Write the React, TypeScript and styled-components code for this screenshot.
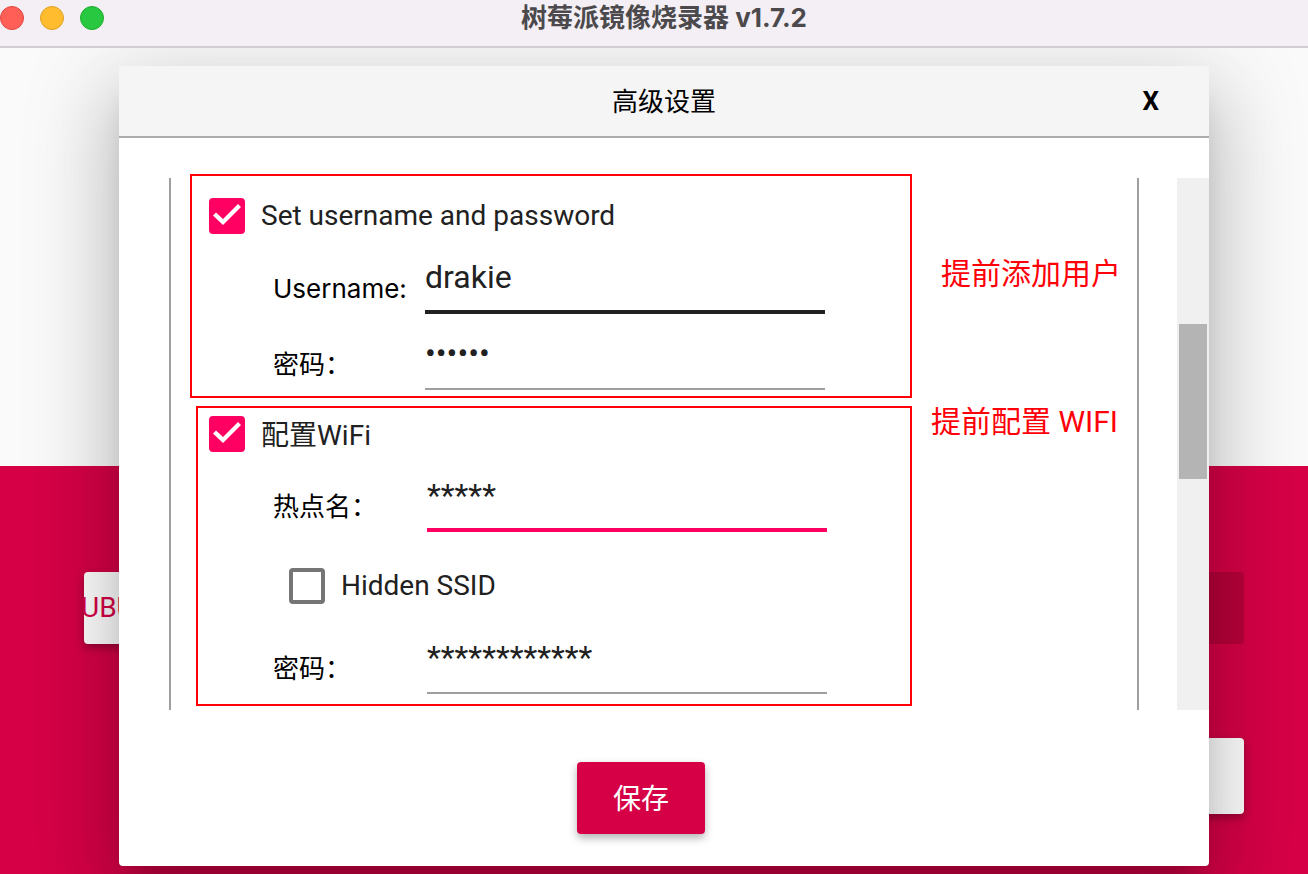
import React, { useState } from "react";
import styled, { createGlobalStyle } from "styled-components";

const systemFont = `Inter, "Noto Sans CJK SC", sans-serif`;
const materialFont = `Roboto, "Noto Sans CJK SC", sans-serif`;

const GlobalStyle = createGlobalStyle`
  * { box-sizing: border-box; }
  body { margin: 0; font-family: ${systemFont}; font-size: 26px; color: #000; }
  button, input { font: inherit; }
`;

const Window = styled.div`
  display: flex;
  flex-direction: column;
  min-height: 100vh;
`;

const TitleBar = styled.header`
  display: grid;
  align-items: center;
  height: 48px;
  padding-bottom: 10px;
  background: #f4eff5;
  border-bottom: 2px solid #d0ced1;
`;

const Lights = styled.div`
  grid-area: 1 / 1;
  display: flex;
  gap: 16px;
`;

const Light = styled.button<{ $fill: string; $edge: string }>`
  width: 24px;
  height: 24px;
  padding: 0;
  border: 1px solid ${(p) => p.$edge};
  border-radius: 50%;
  background: ${(p) => p.$fill};
`;

const WindowTitle = styled.h1`
  grid-area: 1 / 1;
  justify-self: center;
  margin: 0;
  padding-left: 20px;
  font-size: 26px;
  line-height: 32px;
  font-weight: 700;
  color: #4b494c;
`;

const Stage = styled.main`
  flex: 1;
  display: grid;
  overflow: hidden;
`;

const Backdrop = styled.div`
  grid-area: 1 / 1;
  display: flex;
  flex-direction: column;
  background: #fafafa;
`;

const Hero = styled.div`
  flex: 0 0 418px;
`;

const Actions = styled.div`
  flex: 1;
  display: flex;
  flex-direction: column;
  gap: 94px;
  padding: 106px 64px 0 84px;
  background: #d60047;
`;

const ActionRow = styled.div<{ $end?: boolean }>`
  display: flex;
  justify-content: ${(p) => (p.$end ? "flex-end" : "space-between")};
`;

const BackButton = styled.button<{ $tall?: boolean }>`
  width: 320px;
  height: ${(p) => (p.$tall ? 76 : 72)}px;
  padding: 0 0 2px;
  border: 0;
  border-radius: 4px;
  background: #fff;
  box-shadow: 0 4px 8px rgba(0, 0, 0, 0.3);
  color: #d60047;
  font-family: ${materialFont};
  font-size: 28px;
  text-align: left;
  text-indent: -3px;

  &:disabled {
    background: #b8003a;
    box-shadow: none;
  }
`;

const Dialog = styled.form`
  grid-area: 1 / 1;
  align-self: start;
  z-index: 1;
  margin: 18px 99px 8px 119px;
  background: #fff;
  border-radius: 0 0 4px 4px;
  box-shadow:
    0 22px 30px -14px rgba(0, 0, 0, 0.2),
    0 48px 76px 6px rgba(0, 0, 0, 0.14),
    0 18px 92px 16px rgba(0, 0, 0, 0.12);
`;

const DialogHeader = styled.div`
  display: grid;
  grid-template-columns: 1fr auto 1fr;
  align-items: center;
  height: 72px;
  background: #f5f5f5;
  border-bottom: 2px solid #acacac;
`;

const DialogTitle = styled.h2`
  grid-column: 2;
  margin: 0;
  padding-top: 2px;
  font-size: 26px;
  line-height: 36px;
  font-weight: 400;
`;

const CloseButton = styled.button`
  justify-self: end;
  margin-right: 50px;
  padding: 0;
  border: 0;
  background: none;
  color: #000;
  font-family: Roboto, sans-serif;
  font-size: 26px;
  font-weight: 700;
`;

const ScrollArea = styled.div`
  display: flex;
  justify-content: space-between;
  margin-top: 40px;
  padding-left: 50px;
`;

const Panel = styled.div`
  flex: 1;
  display: flex;
  flex-direction: column;
  gap: 8px;
  height: 532px;
  margin-right: 38px;
  border: solid #9e9e9e;
  border-width: 0 2px;
`;

const ScrollTrack = styled.div`
  width: 32px;
  padding: 146px 2px 0;
  background: #f0f0f0;
`;

const ScrollThumb = styled.div`
  height: 155px;
  background: #b4b4b4;
`;

const GroupRow = styled.div<{ $indent: number; $lift?: number }>`
  display: flex;
  margin-top: ${(p) => -(p.$lift ?? 0)}px;
  padding-left: ${(p) => p.$indent}px;
`;

const Group = styled.section<{ $pad: string }>`
  flex: 1;
  min-width: 0;
  border: 2px solid #ff0008;
  padding: ${(p) => p.$pad};
`;

const Note = styled.p<{ $top: number; $left: number }>`
  width: 225px;
  margin: 0;
  padding: ${(p) => `${p.$top}px 0 0 ${p.$left}px`};
  color: #ff0008;
  font-family: ${materialFont};
  font-size: 30px;
  line-height: 32px;
  white-space: nowrap;
`;

const CheckLabel = styled.label<{ $inset?: boolean }>`
  display: flex;
  align-items: center;
  gap: 16px;
  height: 36px;
  margin: ${(p) => (p.$inset ? "36px 0 30px 80px" : "0 0 20px")};
  color: #212121;
  font-family: ${materialFont};
  font-size: 28px;
  white-space: nowrap;
`;

const CheckText = styled.span`
  padding-bottom: 2px;
`;

const CheckBox = styled.span`
  display: grid;
  width: 36px;
  height: 36px;

  input {
    grid-area: 1 / 1;
    appearance: none;
    width: 36px;
    height: 36px;
    margin: 0;
    border: 4px solid #757575;
    border-radius: 4px;
  }
  input:checked {
    border-color: #ff0062;
    background: #ff0062;
  }
  svg {
    grid-area: 1 / 1;
    z-index: 1;
    pointer-events: none;
  }
`;

const FieldRow = styled.div<{ $label: number }>`
  display: grid;
  grid-template-columns: ${(p) => p.$label}px minmax(0, 400px);
  align-items: end;
  margin-left: 64px;

  & + & {
    margin-top: 16px;
  }
`;

const FieldLabel = styled.label`
  padding-bottom: 7px;
  line-height: 36px;
  white-space: nowrap;
`;

type Line = "thin" | "dark" | "accent";
const lineColor = { thin: "#9e9e9e", dark: "#212121", accent: "#ff0062" };

const TextInput = styled.input<{ $line: Line }>`
  width: 100%;
  height: 60px;
  padding: 0 0 ${(p) => (p.$line === "thin" ? 12 : 10)}px;
  border: 0;
  border-bottom: ${(p) => (p.$line === "thin" ? 2 : 4)}px solid ${(p) => lineColor[p.$line]};
  outline: 0;
  background: none;
  color: #212121;
  font-family: ${materialFont};
  font-size: 32px;
`;

const Footer = styled.div`
  display: flex;
  justify-content: center;
  padding: 52px 46px 32px 0;
`;

const SaveButton = styled.button`
  width: 128px;
  height: 72px;
  padding: 0 0 2px;
  border: 0;
  border-radius: 4px;
  background: #d60047;
  box-shadow: 0 4px 8px rgba(0, 0, 0, 0.3);
  color: #fff;
  font-family: ${materialFont};
  font-size: 28px;
`;

function Check({ label, initial, inset }: { label: string; initial: boolean; inset?: boolean }) {
  const [on, setOn] = useState(initial);
  return (
    <CheckLabel $inset={inset}>
      <CheckBox>
        <input type="checkbox" checked={on} onChange={(e) => setOn(e.target.checked)} />
        {on && (
          <svg width="36" height="36" viewBox="0 0 36 36" aria-hidden="true">
            <path d="M4 17.5 L7 14.5 L14 21 L29 6 L32 9 L14 27 Z" fill="#fff" />
          </svg>
        )}
      </CheckBox>
      <CheckText>{label}</CheckText>
    </CheckLabel>
  );
}

interface FieldProps {
  id: string;
  label: string;
  initial: string;
  line: Line;
  labelWidth: number;
  type?: string;
}

function Field({ id, label, initial, line, labelWidth, type = "text" }: FieldProps) {
  const [value, setValue] = useState(initial);
  return (
    <FieldRow $label={labelWidth}>
      <FieldLabel htmlFor={id}>{label}</FieldLabel>
      <TextInput
        id={id}
        type={type}
        autoComplete="off"
        $line={line}
        value={value}
        onChange={(e) => setValue(e.target.value)}
      />
    </FieldRow>
  );
}

export default function App() {
  return (
    <Window lang="zh-CN">
      <GlobalStyle />
      <TitleBar>
        <WindowTitle>树莓派镜像烧录器 v1.7.2</WindowTitle>
        <Lights>
          <Light $fill="#ff5f57" $edge="#e2463f" aria-label="关闭" />
          <Light $fill="#febc2e" $edge="#dfa023" aria-label="最小化" />
          <Light $fill="#28c840" $edge="#1dad2b" aria-label="缩放" />
        </Lights>
      </TitleBar>
      <Stage>
        <Backdrop>
          <Hero />
          <Actions>
            <ActionRow>
              <BackButton>UBUNTU</BackButton>
              <BackButton disabled aria-label="烧录" />
            </ActionRow>
            <ActionRow $end>
              <BackButton $tall aria-label="设置" />
            </ActionRow>
          </Actions>
        </Backdrop>
        <Dialog onSubmit={(e) => e.preventDefault()}>
          <DialogHeader>
            <DialogTitle>高级设置</DialogTitle>
            <CloseButton type="button">X</CloseButton>
          </DialogHeader>
          <ScrollArea>
            <Panel>
              <GroupRow $indent={19} $lift={4}>
                <Group $pad="22px 17px 6px">
                  <Check label="Set username and password" initial />
                  <Field id="user" label="Username:" initial="drakie" line="dark" labelWidth={152} />
                  <Field id="user-password" label="密码：" initial="drakie" line="thin" labelWidth={152} type="password" />
                </Group>
                <Note $top={84} $left={29}>提前添加用户</Note>
              </GroupRow>
              <GroupRow $indent={25}>
                <Group $pad="8px 11px 10px">
                  <Check label="配置WiFi" initial />
                  <Field id="ssid" label="热点名：" initial="*****" line="accent" labelWidth={154} />
                  <Check label="Hidden SSID" initial={false} inset />
                  <Field id="wifi-password" label="密码：" initial="************" line="thin" labelWidth={154} />
                </Group>
                <Note $top={0} $left={19}>提前配置 WIFI</Note>
              </GroupRow>
            </Panel>
            <ScrollTrack>
              <ScrollThumb />
            </ScrollTrack>
          </ScrollArea>
          <Footer>
            <SaveButton type="submit">保存</SaveButton>
          </Footer>
        </Dialog>
      </Stage>
    </Window>
  );
}
